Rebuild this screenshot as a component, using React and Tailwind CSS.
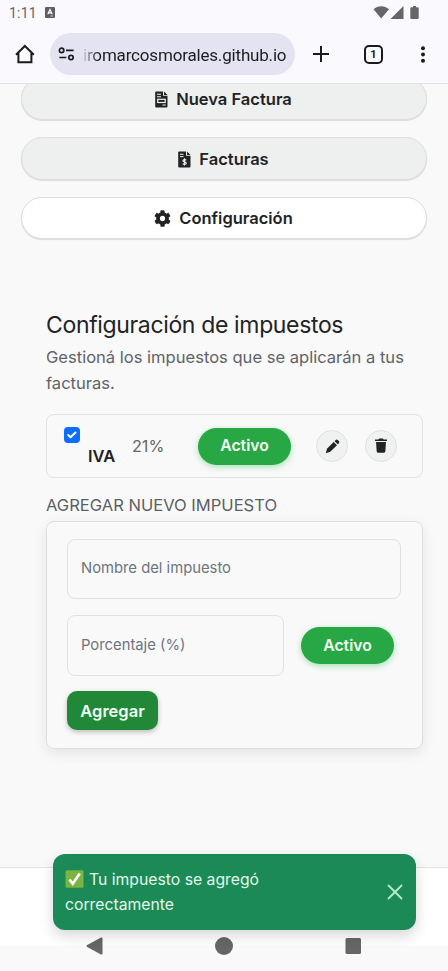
import React from "react";
import { FaCog } from "react-icons/fa";

function StatusBar() {
  return (
    <div className="flex h-[25px] items-center pl-[9px] pr-[28px] text-[#666668]">
      <span className="w-[36px] font-['Roboto',sans-serif] text-[14px] tracking-[0.2px] leading-[16px]">1:11</span>
      <svg className="block" width="10" height="11" viewBox="0 0 10 11">
        <rect width="10" height="11" rx="1" fill="#5f5f61" />
        <path d="M2.800 7.200 5 2.500l2.200 4.700M3.600 5.800h2.800" fill="none" stroke="#fff" strokeWidth="1.200" />
        <path d="M5.500 9h2.500" stroke="#fff" strokeWidth="0.700" />
      </svg>
      <svg className="ml-auto block" width="48" height="15" viewBox="0 0 48 15" fill="#666668">
        <path d="M1.500 4.200C6 .2 12.500 .2 17 4.200L9.200 13.500z" />
        <path d="M31.500 1V14H18.500z" />
        <path d="M41 1h3v1.300h1.700a1 1 0 0 1 1 1V13a1 1 0 0 1-1 1h-6.400a1 1 0 0 1-1-1V3.300a1 1 0 0 1 1-1H41z" />
      </svg>
    </div>
  );
}

function AddressBar() {
  return (
    <div className="flex h-[58px] items-center">
      <svg className="ml-[15px] block" width="20" height="20" viewBox="0 0 20 20" fill="none" stroke="#1b1b1f" strokeWidth="2">
        <path d="M1 10.700 9.900 2l8.900 8.700M3.400 9v9.200h13V9" />
      </svg>
      <div className="ml-[15px] flex h-[42px] w-[245px] items-center rounded-full bg-[#e4e3f1] pl-2">
        <svg className="block" width="17" height="14" viewBox="0 0 17 14" fill="none" stroke="#1b1b1f" strokeWidth="1.700">
          <circle cx="3.600" cy="3.400" r="2.200" />
          <path d="M8 3.400h7.600M1.400 10.500h7" />
          <circle cx="13" cy="10.500" r="2.200" />
        </svg>
        <div className="ml-[8px] mt-[2px] whitespace-nowrap bg-linear-to-r from-[#d0d0dc] from-0% to-[#1b1b22] to-[8%] bg-clip-text font-['Roboto',sans-serif] text-[17px] tracking-[-0.180px] leading-[24px] text-transparent">
          iromarcosmorales.github.io
        </div>
      </div>
      <svg className="ml-[17px] block" width="18" height="18" viewBox="0 0 18 18" stroke="#1b1b1f" strokeWidth="2">
        <path d="M9 1v16M1 9h16" />
      </svg>
      <div className="ml-[34px] flex size-[19px] items-center justify-center rounded-[5px] border-2 border-[#1b1b1f] font-['Roboto',sans-serif] text-[11px] font-bold leading-none text-[#1b1b1f]">
        1
      </div>
      <svg className="ml-[37px] block" width="6" height="17" viewBox="0 0 6 17" fill="#1b1b1f">
        <circle cx="3" cy="2.200" r="2" />
        <circle cx="3" cy="8.500" r="2" />
        <circle cx="3" cy="14.800" r="2" />
      </svg>
    </div>
  );
}

function InvoiceIcon() {
  return (
    <svg className="block" width="13" height="17" viewBox="0 0 13 17">
      <path d="M1 .5h7v4.300h4.500v10.700a1 1 0 0 1-1 1H1.200a1 1 0 0 1-1-1V1.300a.8.8 0 0 1 .8-.8z" fill="#212325" />
      <path d="M9 .6 12.500 4H9z" fill="#212325" />
      <path d="M2 3.300h4M2 5.800h4M7.500 14h3.200" stroke="#eef0ef" strokeWidth="1.100" />
      <rect x="2.700" y="8.300" width="7.500" height="3.200" fill="none" stroke="#eef0ef" strokeWidth="1.200" />
    </svg>
  );
}

function InvoiceDollarIcon() {
  return (
    <svg className="block" width="13" height="17" viewBox="0 0 13 17">
      <path d="M1 .5h7v4.300h4.500v10.700a1 1 0 0 1-1 1H1.200a1 1 0 0 1-1-1V1.300a.8.8 0 0 1 .8-.8z" fill="#212325" />
      <path d="M9 .6 12.500 4H9z" fill="#212325" />
      <path d="M2 3.300h3.500M2 5.600h3.500" stroke="#eef0ef" strokeWidth="1" />
      <path d="M8.300 9.200c-.5-.7-3.300-1-3.400.5 0 1.500 3.400.9 3.400 2.500 0 1.500-2.900 1.300-3.600.4M6.500 7.300v7.200" fill="none" stroke="#eef0ef" strokeWidth="1.100" />
    </svg>
  );
}

function PenIcon() {
  return (
    <svg className="block" width="15" height="15" viewBox="0 0 16 16" fill="#212325">
      <path d="M9.300 3.200 12.800 6.700 5.600 13.600 .8 15.200l1.500-5z" />
      <path d="M10.200 2.300 11.400 1.100q1.200-1 2.400.1l1 1q1 1.200 0 2.300l-1.200 1.200z" />
    </svg>
  );
}

function TrashIcon() {
  return (
    <svg className="mb-px block" width="14" height="15" viewBox="0 0 14 16" fill="#212325">
      <path d="M.6 1.500h3.600L5 .6h4l.8.9h3.600v1.700H.6z" />
      <path d="M1.700 4.300h10.600l-.7 10.200q-.1 1.200-1.300 1.200H3.700q-1.200 0-1.300-1.200z" />
    </svg>
  );
}

function NavPill({ icon, label, active }) {
  return (
    <div
      className={`flex shrink-0 items-center justify-center gap-2 rounded-full border border-[#dcdedd] pr-px text-[16.500px] font-semibold text-[#212325] shadow-[0_1px_1px_rgba(0,0,0,0.12)] ${active ? "h-[42px] bg-white" : "h-[43px] bg-[#eef0ef] pt-px"}`}
    >
      {icon}
      <span>{label}</span>
    </div>
  );
}

function ActiveBadge() {
  return (
    <div className="flex h-[37px] w-[93px] shrink-0 items-center justify-center rounded-full bg-[#28a745] text-[15.700px] font-semibold text-[#f4fff6] shadow-[0_2px_6px_rgba(40,190,80,0.4)]">
      Activo
    </div>
  );
}

function RoundButton({ children }) {
  return (
    <div className="flex size-[32px] shrink-0 items-center justify-center rounded-full border border-[#dfe1e1] bg-[#f0f2f2]">
      {children}
    </div>
  );
}

function TaxRow() {
  return (
    <div className="mt-[18px] flex h-[64px] items-center rounded-[8px] border border-[#e0e2e5] pl-[17px]">
      <div className="flex h-full w-[24px] shrink-0 pt-[12px]">
        <div className="flex size-[16px] items-center justify-center rounded-[4px] bg-[#0d6efd]">
          <svg className="block" width="10" height="8" viewBox="0 0 10 8" fill="none" stroke="#fff" strokeWidth="2" strokeLinecap="round" strokeLinejoin="round">
            <path d="m1.200 4 2.300 2.300L8.500 1.500" />
          </svg>
        </div>
      </div>
      <div className="w-[44px] shrink-0 pt-[19px] text-[16.500px] font-semibold leading-[24px] text-[#1f2123]">IVA</div>
      <div className="w-[66px] shrink-0 text-[16.200px] leading-[24px] text-[#626568]">21%</div>
      <ActiveBadge />
      <div className="ml-[25px] flex gap-[17px]">
        <RoundButton><PenIcon /></RoundButton>
        <RoundButton><TrashIcon /></RoundButton>
      </div>
    </div>
  );
}

function Field({ label, className }) {
  return (
    <div className={`flex items-center rounded-[8px] border border-[#dfe1e4] pl-[13px] text-[14.800px] text-[#6c757d] ${className}`}>
      {label}
    </div>
  );
}

function TaxForm() {
  return (
    <div className="mt-[4px] h-[228px] rounded-[8px] border border-[#dcdee0] px-[20px] pt-[17px] shadow-[0_4px_14px_rgba(0,0,0,0.09)]">
      <Field label="Nombre del impuesto" className="h-[60px] w-[334px] pb-[2px]" />
      <div className="mt-[16px] flex items-center gap-[17px]">
        <Field label="Porcentaje (%)" className="h-[61px] w-[217px] pb-px" />
        <ActiveBadge />
      </div>
      <div className="mt-[15px] flex h-[39px] w-[91px] items-center justify-center rounded-[10px] bg-[#218838] pt-px text-[16.500px] font-semibold text-[#f0fff3] shadow-[0_2px_5px_rgba(0,0,0,0.25)]">
        Agregar
      </div>
    </div>
  );
}

function Toast() {
  return (
    <div className="absolute left-[53px] top-[854px] flex h-[76px] w-[363px] items-center rounded-[12px] bg-[#1b8a57] pl-[12px] pr-[13px] shadow-[0_6px_14px_rgba(0,0,0,0.16)]">
      <div className="w-[240px] pb-px text-[15.750px] leading-[25px] text-[#e2f8eb]">
        <div className="flex items-center gap-[5px] whitespace-nowrap">
          <svg className="block" width="19" height="18" viewBox="0 0 19 18">
            <rect x="0.500" y="0.200" width="18" height="17.500" rx="1.500" fill="#7cb342" />
            <path d="m4.500 9.500 3.200 4.200L14.800 3.500" fill="none" stroke="#fff" strokeWidth="2.700" />
          </svg>
          <span>Tu impuesto se agregó</span>
        </div>
        <div>correctamente</div>
      </div>
      <svg className="ml-auto block" width="16" height="16" viewBox="0 0 16 16" stroke="#b9eccd" strokeWidth="1.800" strokeLinecap="round">
        <path d="m1.500 1.500 13 13M14.500 1.500l-13 13" />
      </svg>
    </div>
  );
}

export default function App() {
  return (
    <div className="relative flex h-[971px] w-[448px] flex-col overflow-hidden bg-[#f9f9f9] font-['Inter',sans-serif]">
      <header className="h-[84px] shrink-0 border-b border-[#e1e1e6] bg-[#faf9fe]">
        <StatusBar />
        <AddressBar />
      </header>
      <main className="flex h-[784px] shrink-0 flex-col overflow-hidden border-b border-[#dfe1e3]">
        <nav className="-mt-[7px] flex h-[163px] shrink-0 flex-col gap-[17px] px-[21px]">
          <NavPill icon={<InvoiceIcon />} label="Nueva Factura" />
          <NavPill icon={<InvoiceDollarIcon />} label="Facturas" />
          <NavPill icon={<FaCog size={17} />} label="Configuración" active />
        </nav>
        <section className="ml-[46px] mt-[70px] w-[377px]">
          <h1 className="whitespace-nowrap text-[23px] tracking-[-0.350px] leading-[30px] text-[#212325]">Configuración de impuestos</h1>
          <p className="mt-[4px] whitespace-nowrap text-[16.560px] leading-[26px] text-[#606367]">
            Gestioná los impuestos que se aplicarán a tus
            <br />
            facturas.
          </p>
          <TaxRow />
          <h2 className="mt-[15px] whitespace-nowrap text-[16.560px] leading-[24px] text-[#5c5f63]">AGREGAR NUEVO IMPUESTO</h2>
          <TaxForm />
        </section>
      </main>
      <div className="h-[78px] shrink-0 bg-white" />
      <footer className="flex h-[25px] shrink-0 items-start bg-[#f9f9f9] pl-[86px]">
        <svg className="-mt-[9px] block" width="276" height="18" viewBox="0 0 276 18" fill="#666">
          <path d="M1.200 8 15 .6q1.500-.5 1.500 1v14.800q0 1.500-1.500 1L1.200 10q-1.400-1 0-2z" />
          <circle cx="138" cy="9" r="9" />
          <rect x="259.500" y="1" width="15.500" height="16" rx="1.500" />
        </svg>
      </footer>
      <Toast />
    </div>
  );
}
